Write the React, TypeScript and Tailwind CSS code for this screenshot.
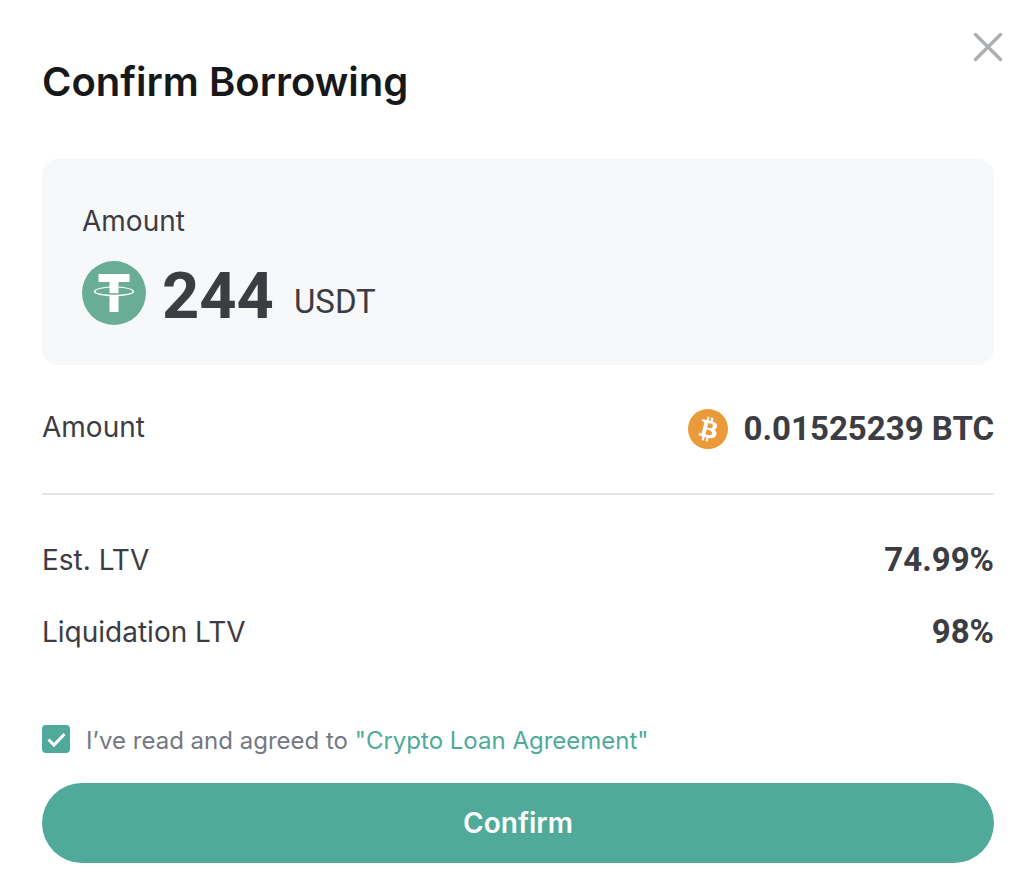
/**
 * Confirm Borrowing dialog
 * Shows the loan summary and asks for the agreement before confirming
 */

import { useState } from 'react';

const ratios = [
  { label: 'Est. LTV', value: '74.99%' },
  { label: 'Liquidation LTV', value: '98%' },
];

function TetherIcon() {
  return (
    <svg viewBox="0 0 64 64" className="size-16 shrink-0" aria-hidden="true">
      <circle cx="32" cy="32" r="32" fill="#6aad97" />
      <path
        fill="#fff"
        fillRule="evenodd"
        d="M11.8 30.5a20.2 4.9 0 0 1 40.4 0a20.2 4.9 0 0 1-40.4 0zM13.5 30.2a18.5 3.6 0 0 0 37 0a18.5 3.6 0 0 0-37 0z"
      />
      <path d="M16.5 13h31v8h-11v11a60 60 0 0 1-9 0V21h-11z" fill="#fff" />
      <path d="M27.5 34.5h9V51h-9z" fill="#fff" />
    </svg>
  );
}

function BitcoinIcon() {
  return (
    <svg viewBox="0 0 32 32" className="size-10 shrink-0" aria-hidden="true">
      <circle cx="16" cy="16" r="16" fill="#ea9a38" />
      <path
        fill="#fff"
        d="M23.189 14.02c.314-2.096-1.283-3.223-3.465-3.975l.708-2.84-1.728-.43-.69 2.765c-.454-.114-.92-.22-1.385-.326l.695-2.783L15.596 6l-.708 2.839c-.376-.086-.746-.17-1.104-.26l.002-.009-2.384-.595-.46 1.846s1.283.294 1.256.312c.7.175.826.638.805 1.006l-.806 3.235c.048.012.11.03.18.057l-.183-.045-1.13 4.532c-.086.212-.303.531-.793.41.018.025-1.256-.313-1.256-.313l-.858 1.978 2.25.561c.418.105.828.215 1.231.318l-.715 2.872 1.727.43.708-2.84c.472.127.93.245 1.378.357l-.706 2.828 1.728.43.715-2.866c2.948.558 5.164.333 6.097-2.333.752-2.146-.037-3.385-1.588-4.192 1.13-.26 1.98-1.003 2.207-2.538zm-3.95 5.538c-.533 2.147-4.148.986-5.32.695l.95-3.805c1.172.293 4.929.872 4.37 3.11zm.535-5.569c-.487 1.953-3.495.96-4.47.717l.86-3.45c.975.243 4.118.696 3.61 2.733z"
      />
    </svg>
  );
}

export default function App() {
  const [agreed, setAgreed] = useState(true);

  return (
    <main className="relative bg-white pt-14 pr-[38px] pb-7 pl-[42px] font-['Inter',sans-serif] text-[28px] leading-9 text-[#3c3d43]">
      <button type="button" aria-label="Close" className="absolute top-8 right-[29px] text-[#adb0b3]">
        <svg viewBox="0 0 30 30" className="size-[30px]" aria-hidden="true">
          <path d="M2.5 2.5l25 25M27.5 2.5l-25 25" stroke="currentColor" strokeWidth="3.5" strokeLinecap="round" />
        </svg>
      </button>

      <h1 className="text-[40px] leading-[52px] font-semibold text-[#17181a]">Confirm Borrowing</h1>

      <section className="mt-[51px] rounded-2xl bg-[#f7f8fa] px-10 pt-11 pb-10">
        <p>Amount</p>
        <div className="mt-[22px] flex items-center">
          <TetherIcon />
          <p className="ml-4 flex items-end gap-5 font-['Roboto',sans-serif]">
            <strong className="pt-[6px] text-[65px] leading-[58px] font-bold">244</strong>
            <span className="text-[33px] leading-[46px]">USDT</span>
          </p>
        </div>
      </section>

      <dl>
        <div className="flex items-start justify-between border-b-2 border-[#e6e6ea] pt-11 pb-11">
          <dt>Amount</dt>
          <dd className="flex items-center gap-4 font-['Roboto',sans-serif] text-[33px] leading-10 font-bold">
            <BitcoinIcon />
            0.01525239 BTC
          </dd>
        </div>
        <div className="flex flex-col gap-8 pt-[45px]">
          {ratios.map((ratio) => (
            <div key={ratio.label} className="flex items-center justify-between">
              <dt>{ratio.label}</dt>
              <dd className="font-['Roboto',sans-serif] text-[33px] leading-10 font-bold">{ratio.value}</dd>
            </div>
          ))}
        </div>
      </dl>

      <div className="mt-[71px] flex items-center gap-4 text-2xl text-[#757882]">
        <span className="grid size-7 shrink-0">
          <input
            id="agreement"
            type="checkbox"
            checked={agreed}
            onChange={(e) => setAgreed(e.target.checked)}
            className="col-start-1 row-start-1 size-7 appearance-none rounded border-2 border-[#50aa99] checked:bg-[#50aa99]"
          />
          {agreed && (
            <svg viewBox="0 0 28 28" className="pointer-events-none col-start-1 row-start-1 size-7" aria-hidden="true">
              <path d="M6.5 14.5l5.5 5.500L22.500 9" fill="none" stroke="#fff" strokeWidth="3" />
            </svg>
          )}
        </span>
        <p className="pt-1 leading-7">
          <label htmlFor="agreement">I’ve read and agreed to</label>{' '}
          <a href="#agreement" className="text-[#50aa99]">
            "Crypto Loan Agreement"
          </a>
        </p>
      </div>

      <button type="button" className="mt-7 h-20 w-full rounded-full bg-[#50aa99] font-semibold text-white">
        Confirm
      </button>
    </main>
  );
}
